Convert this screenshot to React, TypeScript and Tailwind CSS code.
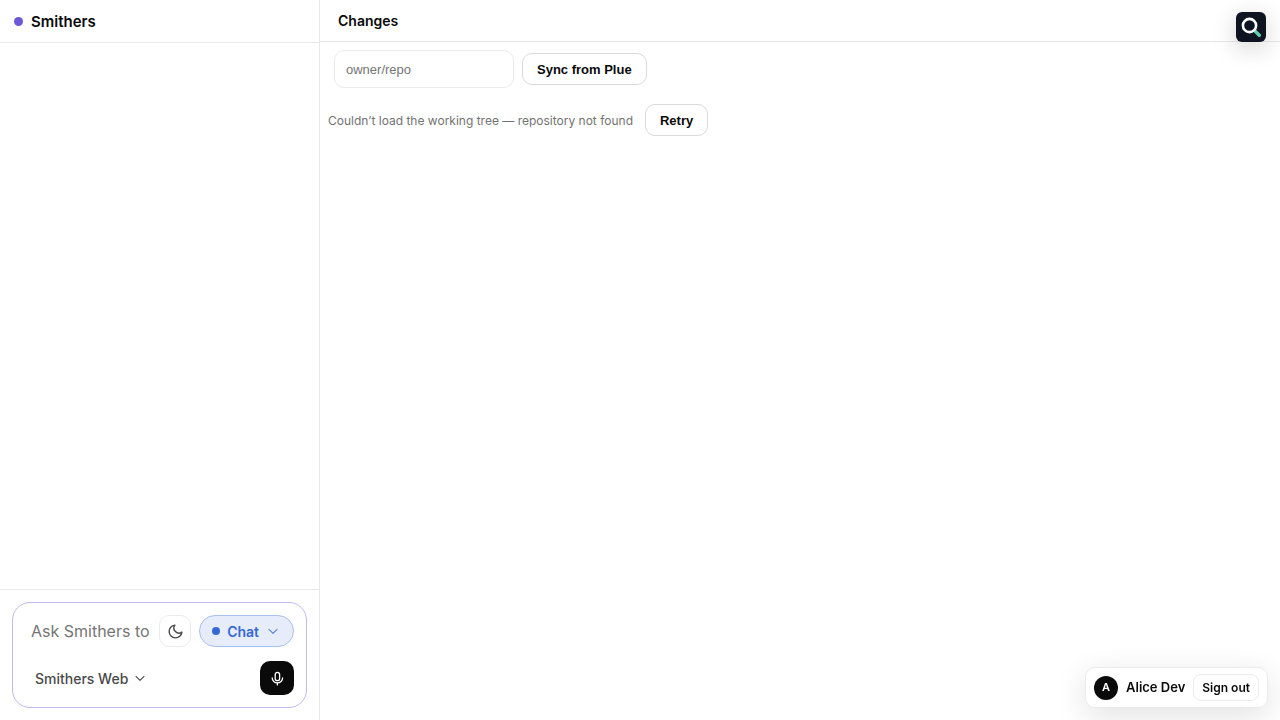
import { useState } from "react";

function ChevronDown({ className }: { className?: string }) {
    return (
        <svg
            viewBox="0 0 12 12"
            fill="none"
            stroke="currentColor"
            strokeWidth="1.1"
            strokeLinecap="round"
            strokeLinejoin="round"
            className={className}
            aria-hidden="true"
        >
            <path d="M2 4.3l4 4 4-4" />
        </svg>
    );
}

function MoonIcon() {
    return (
        <svg
            viewBox="0 0 24 24"
            fill="none"
            stroke="currentColor"
            strokeWidth="2"
            strokeLinecap="round"
            strokeLinejoin="round"
            className="size-[17px]"
            aria-hidden="true"
        >
            <path d="M21 12.8A9 9 0 1 1 11.2 3a7 7 0 0 0 9.8 9.8z" />
        </svg>
    );
}

function MicIcon() {
    return (
        <svg
            viewBox="0 0 16 16"
            fill="none"
            stroke="currentColor"
            strokeWidth="1.3"
            strokeLinecap="round"
            strokeLinejoin="round"
            className="size-4"
            aria-hidden="true"
        >
            <rect x="6.2" y="2.4" width="4.4" height="8.2" rx="2.2" />
            <path d="M3.2 8a5.2 4.9 0 0 0 10.4 0" />
            <path d="M8.4 12.9v2" />
        </svg>
    );
}

function ChatPanel() {
    const [message, setMessage] = useState("");

    return (
        <aside className="flex w-80 shrink-0 flex-col border-r border-[#e8e8e8]">
            <header className="flex h-[43px] items-center gap-2 border-b border-[#e8e8e8] px-3.5">
                <span className="size-[9px] rounded-full bg-[#6b57d9]" />
                <h1 className="pt-0.5 text-[15px] font-semibold">Smithers</h1>
            </header>
            <div className="flex-1" />
            <div className="border-t border-[#e8e8e8] p-3">
                <form
                    onSubmit={(e) => e.preventDefault()}
                    className="flex flex-col gap-3.5 rounded-[18px] border border-[#c1b9ea] p-3"
                >
                    <div className="flex items-center gap-2">
                        <input
                            type="text"
                            aria-label="Message"
                            placeholder="Ask Smithers to do anything"
                            value={message}
                            onChange={(e) => setMessage(e.target.value)}
                            className="h-8 min-w-0 flex-1 bg-transparent pl-1.5 text-base outline-none placeholder:text-[#757575]"
                        />
                        <button
                            type="button"
                            aria-label="Toggle theme"
                            className="flex size-8 items-center justify-center rounded-[10px] border border-[#ebebeb] text-[#4a4a4a]"
                        >
                            <MoonIcon />
                        </button>
                        <button
                            type="button"
                            className="flex h-8 items-center rounded-full border border-[#a9c1ee] bg-[#e6ecf9] px-3 text-sm font-semibold text-[#3569d4]"
                        >
                            <span className="mr-[7px] size-2 rounded-full bg-[#3569d4]" />
                            <span className="pt-0.5">Chat</span>
                            <ChevronDown className="mr-0.5 ml-2 size-3 opacity-80" />
                        </button>
                    </div>
                    <div className="flex items-center justify-between">
                        <button
                            type="button"
                            className="flex items-center gap-1.5 pl-2.5 text-sm font-medium text-[#4a4a4a]"
                        >
                            <span className="pt-0.5">Smithers Web</span>
                            <ChevronDown className="size-3" />
                        </button>
                        <button
                            type="button"
                            aria-label="Start voice input"
                            className="flex size-[34px] items-center justify-center rounded-[10px] bg-[#0a0a0a] text-white"
                        >
                            <MicIcon />
                        </button>
                    </div>
                </form>
            </div>
        </aside>
    );
}

function ChangesPanel() {
    const [repo, setRepo] = useState("");

    return (
        <main className="min-w-0 flex-1">
            <header className="flex h-[42px] items-center border-b border-[#e8e8e8] px-[18px]">
                <h2 className="text-sm font-semibold">Changes</h2>
            </header>
            <div className="flex items-center gap-2 px-3.5 py-2">
                <input
                    type="text"
                    aria-label="Repository"
                    placeholder="owner/repo"
                    value={repo}
                    onChange={(e) => setRepo(e.target.value)}
                    className="h-[38px] w-[180px] rounded-[10px] border border-[#ebebeb] px-[11px] font-['Liberation_Sans',sans-serif] text-[13px] outline-none placeholder:text-[#757575]"
                />
                <button
                    type="button"
                    className="h-8 rounded-[10px] border border-[#d9d9d9] px-3.5 pt-0.5 font-['Liberation_Sans',sans-serif] text-[13px] font-bold"
                >
                    Sync from Plue
                </button>
            </div>
            <div className="flex items-center gap-3 p-2">
                <p className="pt-0.5 text-xs text-[#737373]">
                    Couldn’t load the working tree — repository not found
                </p>
                <button
                    type="button"
                    className="h-8 rounded-[10px] border border-[#d9d9d9] px-3.5 pt-0.5 font-['Liberation_Sans',sans-serif] text-[13px] font-bold"
                >
                    Retry
                </button>
            </div>
        </main>
    );
}

function SearchBadge() {
    return (
        <button
            type="button"
            aria-label="Search"
            className="fixed top-3 right-3.5 size-[30px] rounded-md bg-[#0f1422] shadow-[0_6px_24px_rgba(0,0,0,0.18)]"
        >
            <svg viewBox="0 0 30 30" fill="none" className="size-full" aria-hidden="true">
                <path
                    d="M19.5 19.5l3.8 3.8"
                    stroke="#5fd0ae"
                    strokeWidth="3.4"
                    strokeLinecap="round"
                />
                <circle cx="13.5" cy="13.5" r="6.6" stroke="#fff" strokeWidth="2.6" />
            </svg>
        </button>
    );
}

function AccountCard() {
    return (
        <div className="fixed right-3 bottom-3 flex items-center gap-2 rounded-[10px] border border-[#ebebeb] bg-white px-2 py-1.5 text-[13px] font-semibold shadow-[0_8px_32px_rgba(0,0,0,0.12)]">
            <span className="flex size-6 items-center justify-center rounded-full bg-[#0a0a0a] text-[11px] text-white">
                A
            </span>
            <span>Alice Dev</span>
            <button
                type="button"
                className="h-[27px] rounded-lg border border-[#ebebeb] px-2 text-xs font-semibold"
            >
                Sign out
            </button>
        </div>
    );
}

function App() {
    return (
        <div className="flex min-h-screen bg-white font-['Inter',sans-serif] text-[#0a0a0a]">
            <ChatPanel />
            <ChangesPanel />
            <SearchBadge />
            <AccountCard />
        </div>
    );
}

export default App;
